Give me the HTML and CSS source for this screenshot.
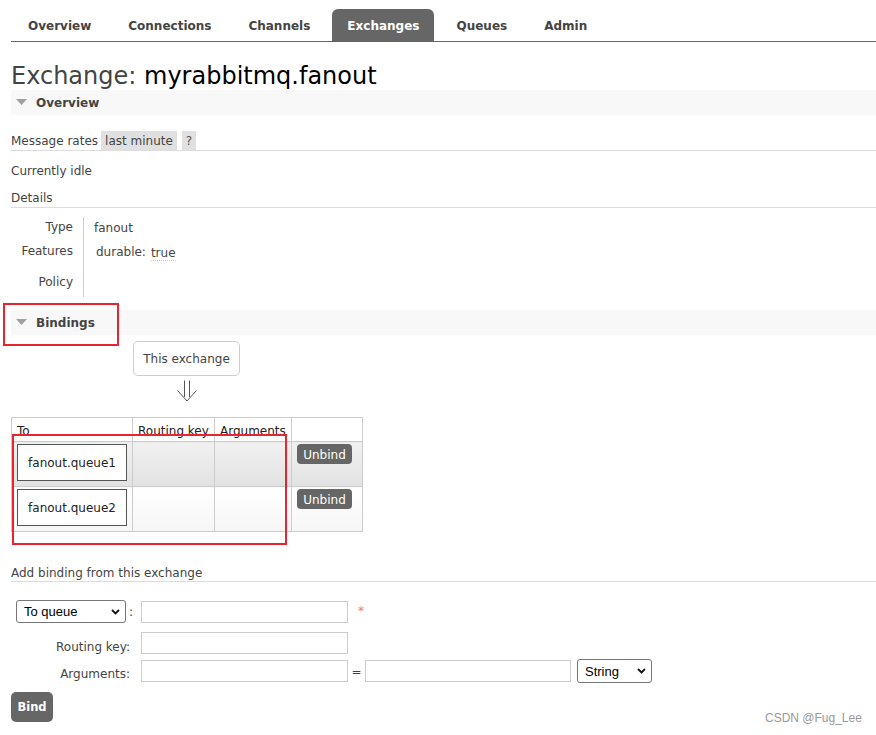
FILE: index.html
```html
<!DOCTYPE html>
<html>
<head>
<meta charset="utf-8">
<title>Exchange: myrabbitmq.fanout</title>
<link rel="stylesheet" href="styles.css">
</head>
<body>
<div class="page">
  <nav class="tabs">
    <a class="tab">Overview</a>
    <a class="tab">Connections</a>
    <a class="tab">Channels</a>
    <a class="tab active">Exchanges</a>
    <a class="tab">Queues</a>
    <a class="tab">Admin</a>
  </nav>

  <h1 class="title"><span class="title-kind">Exchange:</span> <span class="title-name">myrabbitmq.fanout</span></h1>

  <div class="section-head">
    <svg class="tri" width="11" height="6" viewBox="0 0 11 6"><polygon points="0,0 11,0 5.5,6" fill="#a0a0a0"/></svg>
    <span>Overview</span>
  </div>

  <div class="rates">
    <span>Message rates</span>
    <span class="chip">last minute</span>
    <span class="chip chip-q">?</span>
  </div>
  <p class="idle">Currently idle</p>
  <h3 class="subhead">Details</h3>
  <div class="facts">
    <div class="fact-label fl-1">Type</div>
    <div class="fact-value fv-1">fanout</div>
    <div class="fact-label fl-2">Features</div>
    <div class="fact-value fv-2"><span>durable:</span><span class="abbr">true</span></div>
    <div class="fact-label fl-3">Policy</div>
    <div class="fact-value fv-3"></div>
  </div>

  <div class="section-head bindings-head">
    <svg class="tri" width="11" height="6" viewBox="0 0 11 6"><polygon points="0,0 11,0 5.5,6" fill="#a0a0a0"/></svg>
    <span>Bindings</span>
  </div>

  <div class="bindings">
    <div class="source-wrap">
      <div class="source">This exchange</div>
      <svg class="arrow" width="22" height="22" viewBox="0 0 22 22">
        <path d="M8.5 0.5 V17 M13.5 0.5 V17" stroke="#555" stroke-width="1" fill="none"/>
        <path d="M1.5 10.5 L11 21 L20.5 10.5" stroke="#555" stroke-width="1" fill="none"/>
      </svg>
    </div>
    <table class="list">
      <colgroup>
        <col class="c-to"><col class="c-rk"><col class="c-args"><col class="c-act">
      </colgroup>
      <thead>
        <tr><th>To</th><th>Routing key</th><th>Arguments</th><th></th></tr>
      </thead>
      <tbody>
        <tr class="alt1">
          <td><span class="qbox">fanout.queue1</span></td>
          <td></td><td></td>
          <td><button class="btn-small">Unbind</button></td>
        </tr>
        <tr class="alt2">
          <td><span class="qbox">fanout.queue2</span></td>
          <td></td><td></td>
          <td><button class="btn-small">Unbind</button></td>
        </tr>
      </tbody>
    </table>
  </div>

  <h3 class="subhead add-head">Add binding from this exchange</h3>

  <div class="form">
    <div class="frow frow-1">
      <div class="flabel flabel-select">
        <span class="select sel-queue">
          <select><option>To queue</option><option>To exchange</option></select>
          <svg class="chev" width="9" height="6" viewBox="0 0 9 6"><path d="M1 1 L4.5 4.5 L8 1" stroke="#111" stroke-width="1.8" fill="none"/></svg>
        </span>
        <span class="colon">:</span>
      </div>
      <input class="text" type="text">
      <span class="req">*</span>
    </div>
    <div class="frow frow-2">
      <label class="flabel">Routing key:</label>
      <input class="text" type="text">
    </div>
    <div class="frow frow-3">
      <label class="flabel">Arguments:</label>
      <input class="text text-arg" type="text">
      <span class="eq">=</span>
      <input class="text text-arg2" type="text">
      <span class="select sel-type">
        <select><option>String</option><option>Number</option><option>Boolean</option></select>
        <svg class="chev" width="9" height="6" viewBox="0 0 9 6"><path d="M1 1 L4.5 4.5 L8 1" stroke="#111" stroke-width="1.8" fill="none"/></svg>
      </span>
    </div>
    <button class="btn-bind">Bind</button>
  </div>
</div>

<div class="annot annot-1"></div>
<div class="annot annot-2"></div>
<div class="watermark">CSDN @Fug_Lee</div>
</body>
</html>
```

FILE: styles.css
```css
* { box-sizing: border-box; }
html, body { margin: 0; padding: 0; background: #fff; }
body {
  font-family: "DejaVu Sans", Verdana, sans-serif;
  font-size: 12px;
  color: #444;
  position: relative;
  min-height: 735px;
}
.page { padding: 9px 0 0 11px; }

/* tabs */
.tabs {
  display: flex;
  gap: 7px;
  padding-left: 2px;
  border-bottom: 1px solid #666;
}
.tab {
  display: block;
  padding: 10px 15px 8px;
  line-height: 14px;
  font-weight: bold;
  color: #444;
  text-decoration: none;
  border-radius: 6px 6px 0 0;
}
.tab.active { background: #666; color: #fff; }

/* title */
.title {
  margin: 21px 0 0;
  font-size: 24px;
  line-height: 27px;
  font-weight: normal;
  color: #444;
}
.title-name { color: #000; }

/* section header */
.section-head {
  height: 25px;
  background: #f8f8f8;
  display: flex;
  align-items: center;
  gap: 9px;
  padding-left: 5px;
  font-weight: bold;
  line-height: 14px;
  color: #444;
}
.tri { display: block; margin-top: -1px; }

/* overview body */
.rates {
  margin-top: 16px;
  display: flex;
  line-height: 18px;
  border-bottom: 1px solid #ddd;
}
.rates > span:first-child { padding-top: 1px; }
.chip {
  background: #e0e0e0;
  padding: 1px 4px 0;
  margin-left: 3px;
}
.chip-q { margin-left: 5px; color: #555; }
.idle { margin: 13px 0 0; line-height: 14px; }
.subhead {
  margin: 12px 0 0;
  font-size: 12px;
  font-weight: normal;
  line-height: 16px;
  padding-bottom: 1px;
  border-bottom: 1px solid #ddd;
}

.facts {
  margin-top: 9px;
  display: grid;
  grid-template-columns: 72px 1fr;
  grid-template-rows: 23px 28px 29px;
  line-height: 14px;
}
.fact-label { text-align: right; padding-right: 10px; }
.fact-value { border-left: 1px solid #ccc; padding-left: 10px; }
.fl-1 { padding-top: 3px; }
.fv-1 { padding-top: 4px; }
.fl-2 { padding-top: 4px; }
.fv-2 { padding-top: 5px; padding-left: 12px; display: flex; align-items: flex-start; }
.fl-3 { padding-top: 7px; }
.abbr {
  margin-left: 5px;
  margin-top: 2px;
  border-bottom: 1px dotted #ccc;
  line-height: 13px;
}

/* bindings */
.bindings-head { margin-top: 13px; }
.bindings { width: 351px; }
.source-wrap {
  display: flex;
  flex-direction: column;
  align-items: center;
  padding-top: 6px;
}
.source {
  border: 1px solid #ccc;
  border-radius: 5px;
  padding: 10px 9px 8px;
  line-height: 15px;
}
.arrow { display: block; margin-top: 4px; margin-left: 1px; }

.list {
  margin-top: 15px;
  border-collapse: collapse;
  table-layout: fixed;
  width: 351px;
}
.c-to { width: 121px; }
.c-rk { width: 82px; }
.c-args { width: 77px; }
.c-act { width: 71px; }
.list th, .list td {
  border: 1px solid #ccc;
  padding: 2px 5px 5px;
  vertical-align: top;
  text-align: left;
}
.list th {
  font-weight: normal;
  color: #222;
  line-height: 14px;
  padding: 6px 5px 3px;
  white-space: nowrap;
  background: #fff;
}
.list tr.alt1 td { background: linear-gradient(#f1f1f1, #e2e2e2); }
.list tr.alt2 td { background: linear-gradient(#ffffff, #f6f6f6); }
.qbox {
  display: block;
  border: 1px solid #555;
  background: #fff;
  padding: 11px 0 9px;
  line-height: 15px;
  text-align: center;
  color: #222;
}
.btn-small {
  display: block;
  border: none;
  background: #666;
  color: #fff;
  border-radius: 4px;
  font-family: "DejaVu Sans", Verdana, sans-serif;
  font-size: 12px;
  line-height: 16px;
  padding: 3px 0 1px;
  width: 55px;
  text-align: center;
}

/* add binding */
.add-head { margin-top: 33px; padding-bottom: 0; }
.form { margin-top: 18px; }
.frow { display: flex; align-items: flex-start; }
.frow-1 { align-items: center; height: 23px; }
.frow-2 { margin-top: 9px; }
.frow-3 { margin-top: 5px; }
.flabel {
  width: 125px;
  text-align: right;
  padding-right: 6px;
  padding-top: 8px;
  line-height: 14px;
}
.flabel-select {
  display: flex;
  align-items: center;
  padding: 0 0 0 5px;
}
.colon { margin-left: 3px; }
.text {
  margin: 0 0 0 5px;
  width: 207px;
  height: 22px;
  border: 1px solid #ccc;
  padding: 0 3px;
  font-size: 12px;
  background: #fff;
}
.frow-3 .text { margin-top: 1px; }
.text-arg2 { margin-left: 0; width: 206px; }
.eq { width: 17px; text-align: center; padding-top: 6px; line-height: 14px; }
.req { margin-left: 10px; color: #e77; margin-top: -2px; }

.select { display: inline-grid; }
.select > * { grid-area: 1 / 1; }
.select select {
  appearance: none;
  -webkit-appearance: none;
  border: 1px solid #767676;
  border-radius: 3px;
  background: #fff;
  color: #000;
  font-family: "Liberation Sans", Arial, sans-serif;
  font-size: 13px;
  padding: 0 0 0 7px;
  margin: 0;
}
.sel-queue select { width: 110px; height: 23px; }
.sel-type { margin-left: 6px; }
.sel-type select { width: 75px; height: 24px; }
.chev { justify-self: end; align-self: center; margin-right: 6px; pointer-events: none; }

.btn-bind {
  display: block;
  margin-top: 9px;
  width: 42px;
  height: 30px;
  border: none;
  border-radius: 5px;
  background: #666;
  color: #fff;
  font-family: "DejaVu Sans", Verdana, sans-serif;
  font-size: 11.5px;
  font-weight: bold;
  padding: 0;
}

/* overlays */
.annot {
  position: absolute;
  border: 2px solid #e8242e;
}
.annot-1 { left: 3px; top: 303px; width: 116px; height: 43px; }
.annot-2 { left: 12px; top: 434px; width: 275px; height: 111px; }
.watermark {
  position: absolute;
  left: 765px;
  top: 711px;
  font-family: "Liberation Sans", Arial, sans-serif;
  font-size: 12px;
  line-height: 14px;
  color: #999;
}
```
